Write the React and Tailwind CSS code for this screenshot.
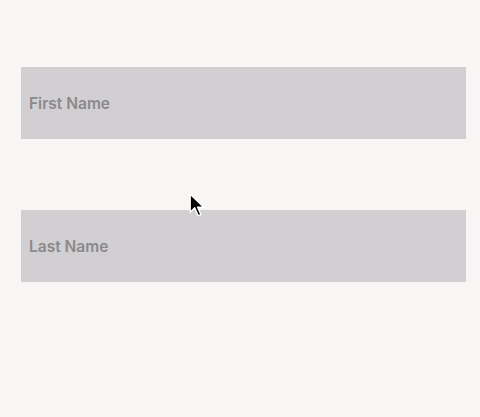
import React from 'react';

const Field = ({ label }) => (
  <div className="flex h-[72px] w-[445px] items-center bg-[#d1cfd1] pl-2 pt-[2px]">
    <span className="text-[15.5px] font-semibold text-[#8b898c]">{label}</span>
  </div>
);

const App = () => {
  return (
    <div
      className="relative h-[417px] w-[480px] bg-[#f7f6f5] pl-[21px] pt-[67px]"
      style={{ fontFamily: 'Inter, "Noto Sans", sans-serif' }}
    >
      <div className="flex flex-col gap-[71px]">
        <Field label="First Name" />
        <Field label="Last Name" />
      </div>

      {/* mouse pointer */}
      <svg
        className="absolute left-[189px] top-[193px]"
        width="16"
        height="25"
        viewBox="0 0 14 22"
      >
        <path
          d="M1 1 L1 17 L5 13 L8 20 L10.5 19 L7.5 12.5 L13 12.5 Z"
          fill="#000"
          stroke="#fff"
          strokeWidth="1.2"
          strokeLinejoin="round"
        />
      </svg>
    </div>
  );
};

export default App;
